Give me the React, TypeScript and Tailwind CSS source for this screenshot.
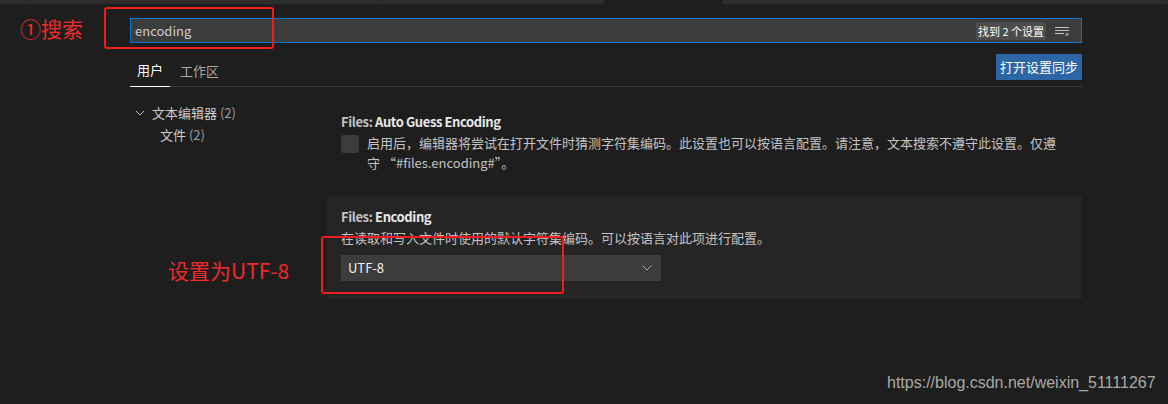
import { ChevronDown } from 'lucide-react'

const tabs = [
  { w: 'w-[26px]', bg: 'bg-[#2d2d2d]' },
  { w: 'w-[225px]', bg: 'bg-[#2d2d2d]' },
  { w: 'w-[133px]', bg: 'bg-[#2d2d2d]' },
  { w: 'w-[220px]', bg: 'bg-[#2d2d2d]' },
  { w: 'w-[119px]', bg: 'bg-[#1e1e1e]' },
  { w: 'flex-1', bg: 'bg-[#2d2d2d]' },
]

const ClearFilterIcon = () => (
  <svg width="16" height="16" viewBox="0 0 16 16" fill="none" stroke="#c5c5c5" strokeWidth="1">
    <path d="M1 4.5h14M1 7.5h14M1 10.5h9" />
    <path d="M11.5 10l3 3M14.5 10l-3 3" />
  </svg>
)

const TreeChevron = () => (
  <svg width="10" height="10" viewBox="0 0 10 10" fill="none" stroke="#c5c5c5" strokeWidth="1">
    <path d="M1 3l4 4 4-4" />
  </svg>
)

export default function App() {
  return (
    <div className="relative w-[1168px] h-[404px] overflow-hidden bg-[#1e1e1e] text-[13px] text-[#cccccc] font-['Noto_Sans_CJK_SC',sans-serif]">
      <div className="flex h-[4px]">
        {tabs.map((t, i) => (
          <div key={i} className={`${t.w} ${t.bg} h-full border-r border-[#252526]`} />
        ))}
      </div>

      <div className="pl-[130px] pr-[86px]">
        {/* search */}
        <div className="mt-[14px] h-[25px] flex items-center border border-[#0078d4] bg-[#3c3c3c] pl-[4px] pr-[11px]">
          <span className="flex-1 leading-[23px] text-[#cccccc]">encoding</span>
          <span className="h-[18px] px-[2px] rounded-[2px] bg-[#4d4d4d] text-[11px] leading-[18px] text-white">
            找到 2 个设置
          </span>
          <span className="ml-[8px] flex">
            <ClearFilterIcon />
          </span>
        </div>

        {/* tabs header */}
        <div className="mt-[11px] h-[33px] flex justify-between border-b border-[#3c3c3c]">
          <div className="flex">
            <div className="h-[33px] -mb-px px-[7px] flex items-center border-b border-white text-white">用户</div>
            <div className="h-[33px] -mb-px pl-[10px] pr-[7px] flex items-center text-[#a8a8a8]">工作区</div>
          </div>
          <button className="h-[26px] px-[4px] bg-[#2d66a5] text-white leading-[26px]">打开设置同步</button>
        </div>

        <div className="flex">
          {/* tree */}
          <div className="w-[197px] pt-[15px]">
            <div className="h-[22px] pl-[5px] flex items-center gap-[7px]">
              <TreeChevron />
              <span>
                文本编辑器 <span className="text-[#9d9d9d]">(2)</span>
              </span>
            </div>
            <div className="h-[22px] pl-[30px] flex items-center">
              <span>
                文件 <span className="text-[#9d9d9d]">(2)</span>
              </span>
            </div>
          </div>

          {/* settings */}
          <div className="flex-1 pt-[15px]">
            <div className="px-[14px] pt-[11px] pb-[23px]">
              <div className="leading-[18px] font-semibold tracking-[-0.4px]">
                <span className="text-[#c2c2c2]">Files: </span>
                <span className="text-[#e8e8e8]">Auto Guess Encoding</span>
              </div>
              <div className="mt-[2px] flex gap-[8px]">
                <div className="mt-[2px] w-[18px] h-[18px] shrink-0 rounded-[3px] bg-[#3c3c3c]" />
                <p className="w-[696px] leading-[20px] text-[#c4c4c4]">
                  启用后，编辑器将尝试在打开文件时猜测字符集编码。此设置也可以按语言配置。请注意，文本搜索不遵守此设置。仅遵守 “#files.encoding#”。
                </p>
              </div>
            </div>

            <div className="bg-[#252526] px-[14px] pt-[12px] pb-[18px]">
              <div className="leading-[18px] font-semibold tracking-[-0.4px]">
                <span className="text-[#c2c2c2]">Files: </span>
                <span className="text-[#e8e8e8]">Encoding</span>
              </div>
              <p className="mt-[2px] leading-[20px] text-[#c4c4c4]">
                在读取和写入文件时使用的默认字符集编码。可以按语言对此项进行配置。
              </p>
              <div className="mt-[7px] w-[320px] h-[26px] flex items-center justify-between bg-[#3c3c3c] pl-[7px] pr-[6px]">
                <span className="text-[#f0f0f0]">UTF-8</span>
                <ChevronDown size={16} strokeWidth={1.25} className="text-[#c5c5c5]" />
              </div>
            </div>
          </div>
        </div>
      </div>

      {/* annotations */}
      <div className="absolute left-[20px] top-[13px] text-[21px] leading-[30px] text-[#f02a2a]">①搜索</div>
      <div className="absolute left-[104px] top-[7px] w-[170px] h-[42px] border-2 border-[#f21c1c] rounded-[3px]" />
      <div className="absolute left-[168px] top-[255px] text-[21px] leading-[30px] text-[#f02a2a]">设置为UTF-8</div>
      <div className="absolute left-[321px] top-[236px] w-[243px] h-[58px] border-2 border-[#f21c1c] rounded-[3px]" />
      <div className="absolute left-[887px] top-[372px] text-[16px] leading-[22px] text-[#a9a9a9] font-['Liberation_Sans',sans-serif]">
        https://blog.csdn.net/weixin_51111267
      </div>
    </div>
  )
}
